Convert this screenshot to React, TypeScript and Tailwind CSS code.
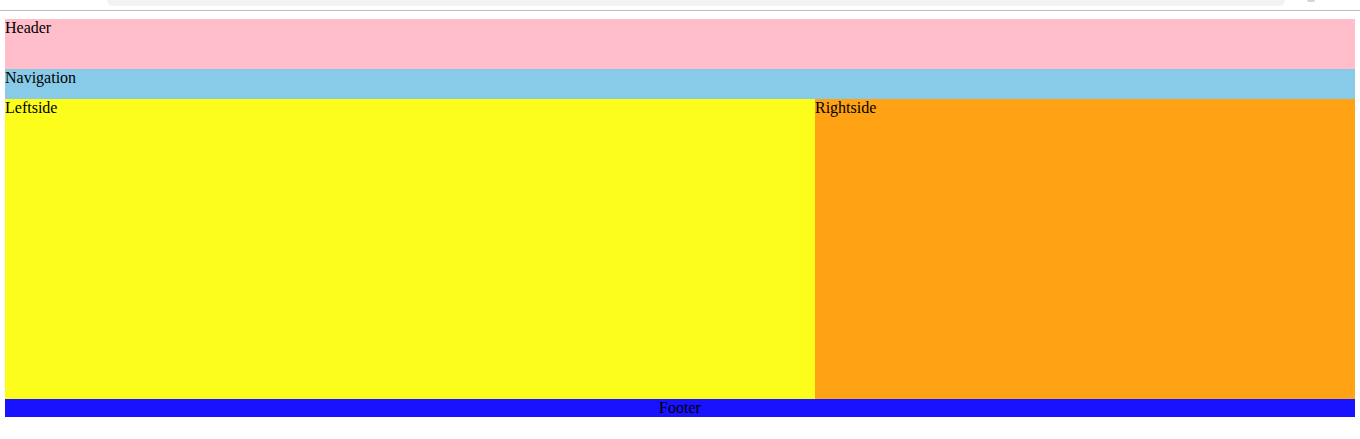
import React from "react";

export default function App() {
  return (
    <div className="w-[1360px] h-[439px] bg-white overflow-hidden" style={{ fontFamily: '"Liberation Serif", "Times New Roman", serif' }}>
      <div className="h-[10px] flex">
        <div className="ml-[107px] w-[1178px] h-[6px] rounded-b-[14px] bg-[#f1f3f4]" />
        <div className="ml-[22px] w-[8px] h-[2px] rounded-b-full bg-[#d6d6d6]" />
      </div>
      <div className="h-px bg-[#bdbdbd]" />
      <div className="px-[5px] pt-[8px] text-[16px] leading-[18px] text-black">
        <div className="h-[50px] bg-[#ffbec9]">Header</div>
        <div className="h-[30px] bg-[#87cbe9]">Navigation</div>
        <div className="flex h-[300px]">
          <div className="w-[810px] bg-[#fdfd1b]">Leftside</div>
          <div className="flex-1 bg-[#ffa213]">Rightside</div>
        </div>
        <div className="h-[18px] bg-[#1912ff] text-center">Footer</div>
      </div>
    </div>
  );
}
